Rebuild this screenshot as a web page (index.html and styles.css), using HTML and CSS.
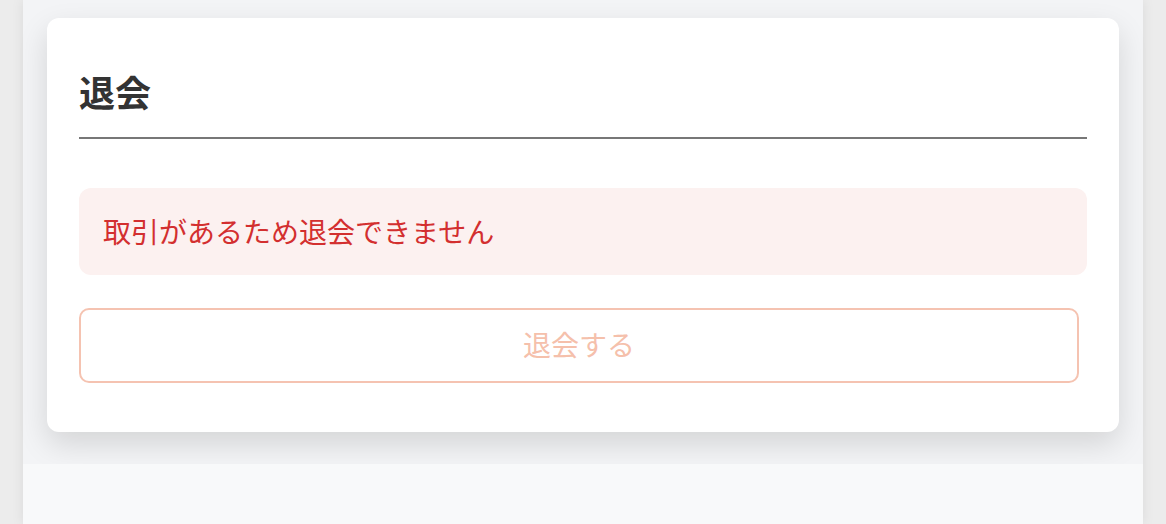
FILE: index.html
```html
<!DOCTYPE html>
<html lang="ja">
<head>
<meta charset="utf-8">
<link rel="stylesheet" href="styles.css">
</head>
<body>
<div class="page">
  <section class="top">
    <div class="card">
      <h1 class="title">退会</h1>
      <div class="alert">取引があるため退会できません</div>
      <button class="withdraw" disabled>退会する</button>
    </div>
  </section>
  <section class="bottom"></section>
</div>
</body>
</html>
```
FILE: styles.css
```css
html, body {
  margin: 0;
  padding: 0;
  background: #ececec;
  height: 100%;
}
body {
  font-family: "Noto Sans CJK JP", "Noto Sans", sans-serif;
  overflow: hidden;
}
.page {
  width: 1120px;
  margin-left: 23px;
  min-height: 524px;
  background: #f8f9fa;
  box-shadow: 0 0 12px rgba(0, 0, 0, 0.08);
  display: flex;
  flex-direction: column;
}
.top {
  background: #f3f4f6;
  padding: 18px 24px 32px;
}
.card {
  background: #fff;
  border-radius: 12px;
  padding: 32px 32px 49px;
  box-shadow: 0 12px 30px rgba(0, 0, 0, 0.13);
  display: flex;
  flex-direction: column;
}
.title {
  margin: 0;
  padding: 20px 0 25px;
  font-size: 36px;
  line-height: 42px;
  font-weight: 700;
  color: #333;
  border-bottom: 2px solid #777;
}
.alert {
  margin-top: 49px;
  background: #fcf1f0;
  border-radius: 12px;
  padding: 27px 24px;
  font-size: 28px;
  line-height: 33px;
  color: #d32f2f;
}
.withdraw {
  margin-top: 33px;
  width: 1000px;
  height: 75px;
  border: 2px solid #f5c3b1;
  border-radius: 10px;
  background: #fff;
  color: #f5c0ab;
  font-family: inherit;
  font-size: 28px;
  line-height: 1;
  padding: 0 0 3px;
}
.bottom {
  flex: 1;
  background: #f8f9fa;
}
```
